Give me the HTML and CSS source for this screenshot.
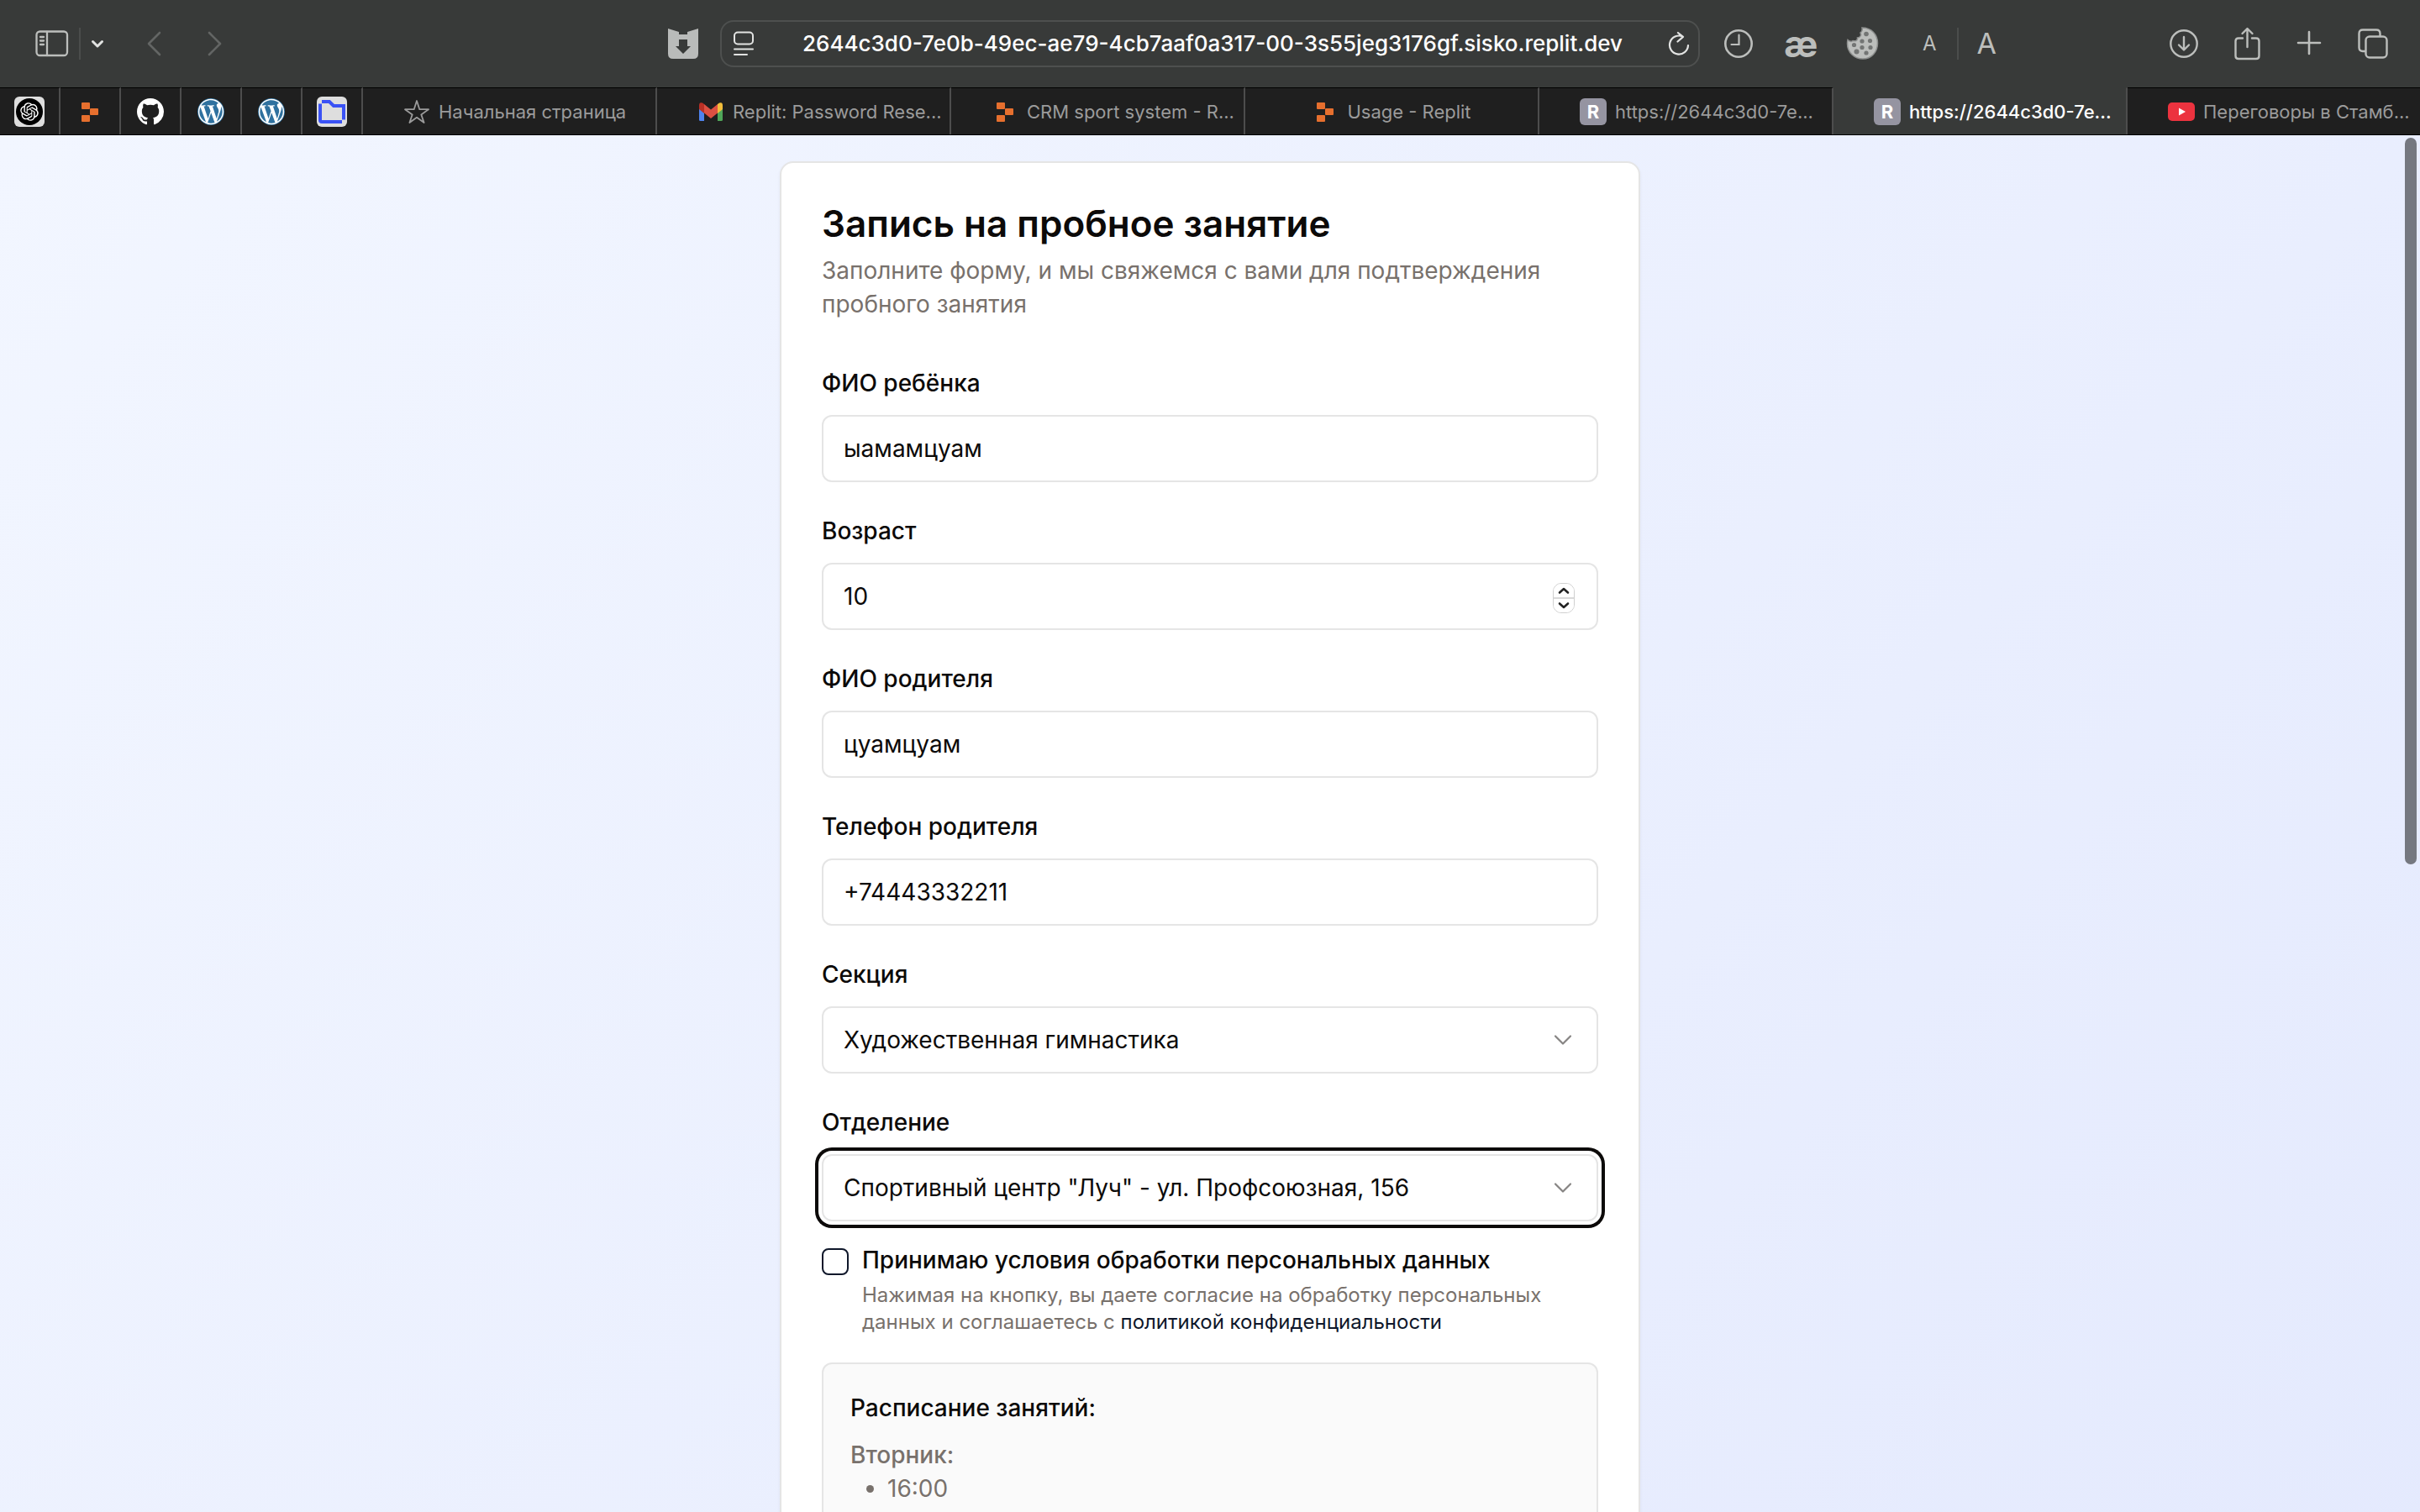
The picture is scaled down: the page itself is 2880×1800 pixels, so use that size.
FILE: index.html
```html
<!DOCTYPE html>
<html lang="ru">
<head>
<meta charset="utf-8">
<meta name="viewport" content="width=device-width, initial-scale=1">
<title>Запись на пробное занятие</title>
<link rel="stylesheet" href="styles.css">
</head>
<body>
<svg class="sprite" aria-hidden="true">
  <symbol id="replit" viewBox="0 0 32 32"><g fill="#e66f2e"><rect x="6" y="5" width="10" height="8" rx="1"/><rect x="16" y="12" width="10" height="8" rx="1"/><rect x="6" y="20" width="10" height="8" rx="1"/></g></symbol>
  <symbol id="wordpress" viewBox="0 0 24 24"><circle cx="12" cy="12" r="12" fill="#2f719f"/><path transform="translate(.6 .6) scale(.95)" fill="#fff" d="M21.469 6.825c.84 1.537 1.318 3.3 1.318 5.175 0 3.979-2.156 7.456-5.363 9.325l3.295-9.527c.615-1.54.82-2.771.82-3.864 0-.405-.026-.78-.07-1.11m-7.981.105c.647-.03 1.232-.105 1.232-.105.582-.075.514-.93-.067-.899 0 0-1.755.135-2.88.135-1.064 0-2.85-.15-2.85-.15-.585-.03-.661.855-.075.885 0 0 .54.061 1.125.09l1.68 4.605-2.37 7.08L5.354 6.9c.649-.03 1.234-.1 1.234-.1.585-.075.516-.93-.065-.896 0 0-1.746.138-2.874.138-.2 0-.438-.008-.69-.015C4.911 3.15 8.235 1.215 12 1.215c2.809 0 5.365 1.072 7.286 2.833-.046-.003-.091-.009-.141-.009-1.06 0-1.812.923-1.812 1.914 0 .89.513 1.643 1.06 2.531.411.72.89 1.643.89 2.977 0 .915-.354 1.994-.821 3.479l-1.075 3.585-3.9-11.61.001.014zM12 22.784c-1.059 0-2.081-.153-3.048-.437l3.237-9.406 3.315 9.087c.024.053.05.101.078.149-1.12.393-2.325.609-3.582.609M1.211 12c0-1.564.336-3.05.935-4.39L7.29 21.709C3.694 19.96 1.212 16.271 1.211 12M12 0C5.385 0 0 5.385 0 12s5.385 12 12 12 12-5.385 12-12S18.615 0 12 0"/></symbol>
  <symbol id="chevron-down" viewBox="0 0 32 32"><path d="M7 11.500l9 9 9-9" fill="none" stroke="currentColor" stroke-width="2.200" stroke-linecap="round" stroke-linejoin="round"/></symbol>
</svg>

<header class="browser">
  <div class="toolbar">
    <div class="toolbar-side toolbar-left">
      <button class="tool" type="button" aria-label="Боковая панель"><svg width="40" height="32" viewBox="0 0 40 32" fill="none" stroke="currentColor" stroke-width="2.300" stroke-linecap="round"><rect x="1.500" y="1.500" width="36.500" height="28.500" rx="4"/><path d="M14 2v28M6 8h4M6 12.500h4M6 17h4"/></svg></button>
      <span class="divider"></span>
      <button class="tool tool-bright" type="button" aria-label="Группы вкладок"><svg width="16" height="16" viewBox="0 0 16 16" fill="none" stroke="currentColor" stroke-width="3" stroke-linecap="round" stroke-linejoin="round"><path d="M2.500 5.500L8 11l5.500-5.500"/></svg></button>
      <button class="tool tool-dim" type="button" aria-label="Назад"><svg width="20" height="32" viewBox="0 0 20 32" fill="none" stroke="currentColor" stroke-width="2.600" stroke-linecap="round" stroke-linejoin="round"><path d="M16 3L3 16l13 13"/></svg></button>
      <button class="tool tool-dim tool-forward" type="button" aria-label="Вперёд"><svg width="20" height="32" viewBox="0 0 20 32" fill="none" stroke="currentColor" stroke-width="2.600" stroke-linecap="round" stroke-linejoin="round"><path d="M3 3l13 13L3 29"/></svg></button>
      <button class="tool tool-shield" type="button" aria-label="Загрузчик"><svg width="36" height="36" viewBox="0 0 36 36" fill="currentColor"><path fill-rule="evenodd" d="M0 0l13 4v3h10V4l13-4v30q0 6-6 6H6q-6 0-6-6zM13 13v8H9l9 9 9-9h-4v-8z"/></svg></button>
    </div>
    <div class="address">
      <button class="tool tool-bright" type="button" aria-label="Меню страницы"><svg width="24" height="30" viewBox="0 0 24 30" fill="none" stroke="currentColor" stroke-width="2" stroke-linecap="round"><rect x="1" y="1.500" width="22" height="14" rx="4"/><path d="M1 21.500h22M1 28h15"/></svg></button>
      <input class="address-text" type="text" aria-label="Адрес" value="2644c3d0-7e0b-49ec-ae79-4cb7aaf0a317-00-3s55jeg3176gf.sisko.replit.dev">
      <button class="tool tool-bright" type="button" aria-label="Обновить"><svg width="26" height="30" viewBox="0 0 26 30" fill="none" stroke="currentColor" stroke-width="2.200" stroke-linecap="round" stroke-linejoin="round"><path d="M17.500 6.500A11 11 0 1 0 24 17M12 2l6 4.800-6.500 5.700"/></svg></button>
    </div>
    <div class="toolbar-side toolbar-right">
      <div class="extensions">
        <button class="tool" type="button" aria-label="История"><svg width="36" height="36" viewBox="0 0 36 36" fill="none" stroke="currentColor" stroke-width="2.600" stroke-linecap="round"><circle cx="18" cy="18" r="15.700"/><path d="M18.500 7.500V19H9.500" stroke-width="2.200"/></svg></button>
        <button class="tool tool-ae" type="button">æ</button>
        <button class="tool" type="button" aria-label="Cookie"><svg width="40" height="40" viewBox="0 0 40 40"><path d="M19 1c11 0 18.500 8 18.500 18.500S30 38 20 38 1.500 30.500 1.500 20c0-2 0-3 .5-4.500 2 2 4.500 2.500 6 1 4 1 6-1 5.500-3.500 4-.5 5-3.500 3.500-6C19.500 5 19.500 3 19 1z" fill="#bcbebc" stroke="#8d8f8e" stroke-width="1.500"/><g fill="#737574"><circle cx="24" cy="8.500" r="2.800"/><circle cx="19" cy="17" r="2.600"/><circle cx="28.500" cy="16.500" r="2.600"/><circle cx="9.500" cy="21.500" r="2.600"/><circle cx="19" cy="24.500" r="2.600"/><circle cx="29" cy="24.500" r="2.600"/><circle cx="12.500" cy="29.500" r="3"/><circle cx="24" cy="31" r="2.600"/></g></svg></button>
        <div class="text-size">
          <button class="tool size-small" type="button">A</button>
          <span class="divider"></span>
          <button class="tool size-large" type="button">A</button>
        </div>
      </div>
      <div class="actions">
        <button class="tool" type="button" aria-label="Загрузки"><svg width="36" height="36" viewBox="0 0 36 36" fill="none" stroke="currentColor" stroke-width="2.400" stroke-linecap="round" stroke-linejoin="round"><circle cx="18" cy="18" r="15.700"/><path d="M18 10v15M12 19.500l6 6 6-6"/></svg></button>
        <button class="tool" type="button" aria-label="Поделиться"><svg width="36" height="40" viewBox="0 0 36 40" fill="none" stroke="currentColor" stroke-width="2.400" stroke-linecap="round" stroke-linejoin="round"><path d="M13 13.500H8q-3.500 0-3.500 3.500v17.500Q4.500 38 8 38h21q3.500 0 3.500-3.500V17q0-3.500-3.500-3.500h-5M18.500 24V2.500M12.500 8l6-6 6 6"/></svg></button>
        <button class="tool" type="button" aria-label="Новая вкладка"><svg width="36" height="36" viewBox="0 0 36 36" fill="none" stroke="currentColor" stroke-width="2.600" stroke-linecap="round"><path d="M17 4v26M4 17h26"/></svg></button>
        <button class="tool" type="button" aria-label="Обзор вкладок"><svg width="36" height="36" viewBox="0 0 36 36" fill="none" stroke="currentColor" stroke-width="2.400"><rect x="9.500" y="9.500" width="25" height="25" rx="4.500"/><path d="M9 27H6q-4.500 0-4.500-4.500V6Q1.500 1.500 6 1.500h16Q26.500 1.500 26.500 6v3"/></svg></button>
      </div>
    </div>
  </div>

  <nav class="tabs" aria-label="Вкладки">
    <a class="pinned" href="#" aria-label="ChatGPT"><svg width="36" height="36" viewBox="0 0 36 36"><rect width="36" height="36" rx="6" fill="#dedede"/><circle cx="18" cy="18" r="16" fill="#000"/><path transform="translate(7.200 7.200) scale(.9)" fill="#fff" d="M22.2819 9.8211a5.9847 5.9847 0 0 0-.5157-4.9108 6.0462 6.0462 0 0 0-6.5098-2.9A6.0651 6.0651 0 0 0 4.9807 4.1818a5.9847 5.9847 0 0 0-3.9977 2.9 6.0462 6.0462 0 0 0 .7427 7.0966 5.98 5.98 0 0 0 .511 4.9107 6.051 6.051 0 0 0 6.5146 2.9001A5.9847 5.9847 0 0 0 13.2599 24a6.0557 6.0557 0 0 0 5.7718-4.2058 5.9894 5.9894 0 0 0 3.9977-2.9001 6.0557 6.0557 0 0 0-.7475-7.0729zm-9.022 12.6081a4.4755 4.4755 0 0 1-2.8764-1.0408l.1419-.0804 4.7783-2.7582a.7948.7948 0 0 0 .3927-.6813v-6.7369l2.02 1.1686a.071.071 0 0 1 .038.052v5.5826a4.504 4.504 0 0 1-4.4945 4.4944zm-9.6607-4.1254a4.4708 4.4708 0 0 1-.5346-3.0137l.142.0852 4.783 2.7582a.7712.7712 0 0 0 .7806 0l5.8428-3.3685v2.3324a.0804.0804 0 0 1-.0332.0615L9.74 19.9502a4.4992 4.4992 0 0 1-6.1408-1.6464zM2.3408 7.8956a4.485 4.485 0 0 1 2.3655-1.9728V11.6a.7664.7664 0 0 0 .3879.6765l5.8144 3.3543-2.0201 1.1685a.0757.0757 0 0 1-.071 0l-4.8303-2.7865A4.504 4.504 0 0 1 2.3408 7.872zm16.5963 3.8558L13.1038 8.364 15.1192 7.2a.0757.0757 0 0 1 .071 0l4.8303 2.7913a4.4944 4.4944 0 0 1-.6765 8.1042v-5.6772a.79.79 0 0 0-.407-.667zm2.0107-3.0231l-.142-.0852-4.7735-2.7818a.7759.7759 0 0 0-.7854 0L9.409 9.2297V6.8974a.0662.0662 0 0 1 .0284-.0615l4.8303-2.7866a4.4992 4.4992 0 0 1 6.6802 4.66zM8.3065 12.863l-2.02-1.1638a.0804.0804 0 0 1-.038-.0567V6.0742a4.4992 4.4992 0 0 1 7.3757-3.4537l-.142.0805L8.704 5.459a.7948.7948 0 0 0-.3927.6813zm1.0976-2.3654l2.602-1.4998 2.6069 1.4998v2.9994l-2.5974 1.4997-2.6067-1.4997Z"/></svg></a>
    <a class="pinned" href="#" aria-label="Replit"><svg width="32" height="32"><use href="#replit"/></svg></a>
    <a class="pinned" href="#" aria-label="GitHub"><svg width="32" height="32" viewBox="0 0 16 16"><path fill="#fff" d="M8 0C3.580 0 0 3.580 0 8c0 3.540 2.290 6.530 5.470 7.590.4.070.55-.17.55-.38 0-.19-.01-.82-.01-1.490-2.010.37-2.530-.49-2.690-.94-.09-.23-.48-.94-.82-1.130-.28-.15-.68-.52-.01-.53.63-.01 1.080.58 1.230.82.72 1.210 1.870.87 2.330.66.070-.52.28-.87.51-1.070-1.780-.2-3.640-.89-3.640-3.950 0-.87.31-1.590.82-2.150-.08-.2-.36-1.020.08-2.120 0 0 .67-.21 2.200.82.64-.18 1.320-.27 2-.27s1.360.09 2 .27c1.530-1.040 2.200-.82 2.200-.82.44 1.100.16 1.920.08 2.120.51.56.82 1.270.82 2.150 0 3.070-1.870 3.750-3.650 3.950.29.25.54.73.54 1.480 0 1.070-.01 1.930-.01 2.200 0 .21.15.46.55.38A8.010 8.010 0 0 0 16 8c0-4.420-3.580-8-8-8z"/></svg></a>
    <a class="pinned" href="#" aria-label="WordPress"><svg width="32" height="32"><use href="#wordpress"/></svg></a>
    <a class="pinned" href="#" aria-label="WordPress"><svg width="32" height="32"><use href="#wordpress"/></svg></a>
    <a class="pinned" href="#" aria-label="Файлы"><svg width="36" height="36" viewBox="0 0 36 36"><rect width="36" height="36" rx="6" fill="#dedede"/><path d="M6 6h9l5 5h12v16.500M30 30H6q-2 0-2-2V8.500" fill="none" stroke="#3a52f5" stroke-width="4"/></svg></a>

    <a class="tab" href="#"><span class="tab-body"><svg width="32" height="32" viewBox="0 0 32 32"><path d="M16 3l3.300 10.200H30l-8.700 6.200 3.300 9.600L16 22.800 7.400 29l3.300-9.600L2 13.200h10.700z" fill="none" stroke="#9b9b9b" stroke-width="1.800" stroke-linejoin="round"/></svg>Начальная страница</span></a>
    <a class="tab" href="#"><span class="tab-body"><svg width="32" height="32" viewBox="0 0 32 32"><path d="M2 8v17.500Q2 27 3.500 27H8V13z" fill="#4f83ee"/><path d="M30 8v17.500q0 1.500-1.500 1.500H24V13z" fill="#4fa659"/><path d="M24 7l2-1.500q4-1.500 4 3V13l-6 5z" fill="#f2bd3b"/><path d="M8 7L6 5.500q-4-1.500-4 3V13l6 5z" fill="#b93025"/><path d="M8 7l8 6.500L24 7v10.500L16 24l-8-6.500z" fill="#dc5042"/></svg>Replit: Password Rese...</span></a>
    <a class="tab" href="#"><span class="tab-body"><svg width="32" height="32"><use href="#replit"/></svg>CRM sport system - R...</span></a>
    <a class="tab" href="#"><span class="tab-body"><svg width="32" height="32"><use href="#replit"/></svg>Usage - Replit</span></a>
    <a class="tab" href="#"><span class="tab-body"><span class="letter">R</span>https://2644c3d0-7e...</span></a>
    <a class="tab tab-active" href="#" aria-current="page"><span class="tab-body"><span class="letter">R</span>https://2644c3d0-7e...</span></a>
    <a class="tab" href="#"><span class="tab-body"><svg width="32" height="32" viewBox="0 0 32 32"><rect y="5" width="32" height="22" rx="5" fill="#ec333f"/><path d="M13 11.500v9l8-4.500z" fill="#fff"/></svg>Переговоры в Стамб...</span></a>
  </nav>
</header>

<main class="page">
  <form class="card">
    <div class="card-head">
      <h1 class="title">Запись на пробное занятие</h1>
      <p class="lead">Заполните форму, и мы свяжемся с вами для подтверждения<br>пробного занятия</p>
    </div>

    <div class="fields">
      <div class="field">
        <label class="label" for="child">ФИО ребёнка</label>
        <input class="control" id="child" type="text" value="ыамамцуам">
      </div>
      <div class="field">
        <label class="label" for="age">Возраст</label>
        <div class="control-wrap">
          <input class="control" id="age" type="number" value="10">
          <span class="spinner">
            <button class="spin" type="button" aria-label="Больше"><svg width="14" height="10" viewBox="0 0 14 10"><path d="M2 7.500l5-4.500 5 4.500" fill="none" stroke="#222" stroke-width="2.600" stroke-linecap="round" stroke-linejoin="round"/></svg></button>
            <button class="spin" type="button" aria-label="Меньше"><svg width="14" height="10" viewBox="0 0 14 10"><path d="M2 2.500l5 4.500 5-4.500" fill="none" stroke="#222" stroke-width="2.600" stroke-linecap="round" stroke-linejoin="round"/></svg></button>
          </span>
        </div>
      </div>
      <div class="field">
        <label class="label" for="parent">ФИО родителя</label>
        <input class="control" id="parent" type="text" value="цуамцуам">
      </div>
      <div class="field">
        <label class="label" for="phone">Телефон родителя</label>
        <input class="control" id="phone" type="tel" value="+74443332211">
      </div>
      <div class="field">
        <label class="label" for="section">Секция</label>
        <div class="control-wrap">
          <select class="control" id="section"><option>Художественная гимнастика</option></select>
          <svg class="select-arrow" width="32" height="32"><use href="#chevron-down"/></svg>
        </div>
      </div>
      <div class="field">
        <label class="label" for="branch">Отделение</label>
        <div class="control-wrap">
          <select class="control control-focus" id="branch"><option>Спортивный центр "Луч" - ул. Профсоюзная, 156</option></select>
          <svg class="select-arrow" width="32" height="32"><use href="#chevron-down"/></svg>
        </div>
      </div>
    </div>

    <div class="consent">
      <input class="checkbox" id="consent" type="checkbox">
      <div>
        <label class="label consent-label" for="consent">Принимаю условия обработки персональных данных</label>
        <p class="hint">Нажимая на кнопку, вы даете согласие на обработку персональных<br>данных и соглашаетесь с <a class="link" href="#">политикой конфиденциальности</a></p>
      </div>
    </div>

    <section class="schedule">
      <h2 class="schedule-title">Расписание занятий:</h2>
      <h3 class="day">Вторник:</h3>
      <ul class="times"><li>16:00</li></ul>
    </section>
  </form>
  <span class="scrollbar"></span>
</main>
</body>
</html>
```
FILE: styles.css
```css
*, *::before, *::after { box-sizing: border-box; }

body {
  margin: 0;
  height: 100vh;
  display: flex;
  flex-direction: column;
  overflow: hidden;
  font-family: Inter, "Liberation Sans", sans-serif;
  font-size: 28px;
  line-height: 40px;
  color: #0c0a09;
}

h1, h2, h3, p, ul { margin: 0; }
svg { display: block; flex: none; }
button, input, select { font: inherit; color: inherit; }
.sprite { position: absolute; width: 0; height: 0; }

/* Browser chrome */
.browser {
  flex: none;
  background: #383a39;
  border-bottom: 1px solid #000;
}

.toolbar {
  display: grid;
  grid-template-columns: 1fr 40.5% 1fr;
  align-items: center;
  height: 104px;
}

.toolbar-side, .extensions, .actions, .text-size { display: flex; align-items: center; }

.tool {
  display: flex;
  align-items: center;
  justify-content: center;
  padding: 0;
  border: 0;
  background: none;
  color: #bcbebc;
}
.tool-bright { color: #e2e3e2; }
.tool-dim { color: #636564; margin-left: 38px; }
.tool-dim.tool-forward { margin-left: 40px; }
.tool-shield { margin-left: auto; color: #b9bbba; }

.divider { width: 2px; height: 38px; background: #4b4d4c; }

.toolbar-left { padding: 0 26px 0 42px; gap: 12px; }
.toolbar-right { padding: 0 38px 0 26px; justify-content: space-between; }

.address {
  display: flex;
  align-items: center;
  height: 56px;
  padding: 0 10px 0 14px;
  border: 2px solid #4e504f;
  border-radius: 16px;
}
.address-text {
  flex: 1;
  min-width: 0;
  padding: 0 0 0 4px;
  border: 0;
  background: none;
  text-align: center;
  font-size: 26px;
  font-weight: 500;
  color: #fff;
}

.extensions { gap: 34px; }
.extensions > .tool { width: 40px; }
.tool-ae { font-size: 44px; font-weight: 700; }
.text-size { gap: 8px; }
.text-size .tool { width: 50px; }
.size-small { font-size: 24px; }
.size-large { font-size: 34px; }
.actions { gap: 39px; }

.tabs {
  display: flex;
  height: 56px;
  font-size: 22px;
  line-height: 32px;
}
.pinned, .tab {
  border-top: 1px solid #000;
  border-right: 2px solid #4d4d4d;
  background: #1f1f1f;
  color: #9b9b9b;
  text-decoration: none;
}
.pinned {
  flex: none;
  display: flex;
  align-items: center;
  justify-content: center;
  width: 72px;
}
.tab {
  flex: 1 1 0;
  min-width: 0;
  display: grid;
  grid-template-columns: minmax(48px, 1fr) auto minmax(8px, 1fr);
  align-items: center;
  white-space: nowrap;
}
.tab:last-child { border-right: 0; }
.tab-body { grid-column: 2; display: flex; align-items: center; gap: 10px; }
.tab-active {
  border-top-color: transparent;
  background: #383a39;
  color: #fff;
  font-weight: 500;
}
.letter {
  width: 32px;
  border-radius: 6px;
  background: #9594a1;
  color: #fff;
  font-weight: 700;
  text-align: center;
}

/* Page */
.page {
  position: relative;
  flex: 1;
  min-height: 0;
  overflow: hidden;
  padding: 31px 32px;
  background: linear-gradient(to bottom right, #f2f6ff, #e0e6fd) 0 0 / 100% 3100px;
}

.scrollbar {
  position: absolute;
  top: 3px;
  right: 4px;
  width: 14px;
  height: 52.8%;
  border-radius: 7px;
  background: #757880;
}

.card {
  max-width: 1024px;
  margin: 0 auto;
  padding: 48px;
  border: 2px solid #e5e5e5;
  border-radius: 16px;
  background: #fff;
  box-shadow: 0 2px 4px rgb(0 0 0 / 5%);
}

.title {
  font-size: 44px;
  line-height: 48px;
  font-weight: 600;
}
.lead { margin-top: 12px; color: #78716c; }

.fields {
  display: flex;
  flex-direction: column;
  gap: 38px;
  margin-top: 54px;
}
.field { display: flex; flex-direction: column; gap: 18px; }
.label { font-weight: 500; }

.control-wrap { position: relative; }
.control {
  display: block;
  width: 100%;
  height: 80px;
  padding: 0 24px;
  border: 2px solid #e5e5e5;
  border-radius: 12px;
  background: #fff;
  appearance: none;
  outline: 0;
}
.control[type="number"] { appearance: textfield; }
.control::-webkit-inner-spin-button { display: none; }
.control-focus { box-shadow: 0 0 0 4px #fff, 0 0 0 8px #0c0a09; }

.select-arrow {
  position: absolute;
  top: 24px;
  right: 26px;
  color: #868483;
  pointer-events: none;
}

.spinner {
  position: absolute;
  top: 24px;
  right: 28px;
  display: flex;
  flex-direction: column;
  width: 26px;
  height: 36px;
  border: 1px solid #d0d0d0;
  border-radius: 10px;
  overflow: hidden;
}
.spin {
  flex: 1;
  display: flex;
  align-items: center;
  justify-content: center;
  padding: 0;
  border: 0;
  background: #fff;
}
.spin + .spin { border-top: 2px solid #d9d9d9; }

.consent {
  display: flex;
  gap: 16px;
  margin-top: 26px;
}
.checkbox {
  flex: none;
  width: 32px;
  height: 32px;
  margin: 6px 0 0;
  border: 2px solid #0f172a;
  border-radius: 8px;
  background: #fff;
  appearance: none;
}
.consent-label { display: block; }
.hint {
  margin-top: 6px;
  font-size: 24px;
  line-height: 32px;
  color: #78716c;
}
.link { color: #0f172a; text-decoration: none; }

.schedule {
  margin-top: 32px;
  padding: 32px;
  border: 2px solid #e5e5e5;
  border-radius: 12px;
  background: #fafafa;
}
.schedule-title { font-size: 28px; font-weight: 500; line-height: 40px; }
.day {
  margin-top: 16px;
  font-size: 28px;
  line-height: 40px;
  font-weight: 500;
  color: #78716c;
}
.times { padding-left: 44px; color: #78716c; }
```
